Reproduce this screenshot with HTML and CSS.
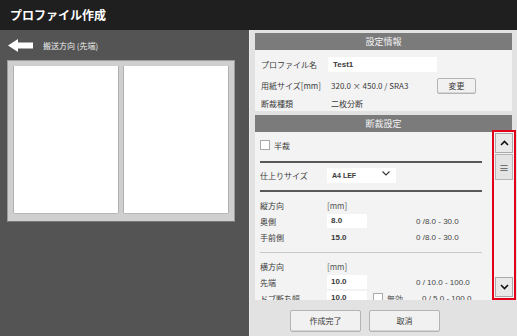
FILE: index.html
```html
<!DOCTYPE html>
<html>
<head>
    <meta charset="utf-8">
    <title>プロファイル作成</title>
    <link rel="stylesheet" href="styles.css">
</head>
<body>
    <div class="header">プロファイル作成</div>

    <div class="main">
        <!-- 左側: 用紙プレビュー -->
        <div class="preview">
            <div class="direction">
                <svg class="arrow" width="25" height="13" viewBox="0 0 25 13">
                    <path d="M0 6.5 L10 0 L10 3.5 L25 3.5 L25 9.5 L10 9.5 L10 13 Z" fill="#fff"/>
                </svg>
                <span>搬送方向 (先端)</span>
            </div>
            <div class="sheet">
                <div class="page"></div>
                <div class="page"></div>
            </div>
        </div>

        <!-- 右側: 設定 -->
        <div class="settings">
            <div class="section-title">設定情報</div>
            <div class="info">
                <div class="info-row r1">
                    <span class="label">プロファイル名</span>
                    <span class="text-box name-box">Test1</span>
                </div>
                <div class="info-row r2">
                    <span class="label">用紙サイズ[mm]</span>
                    <span class="value">320.0 × 450.0 / SRA3</span>
                    <span class="btn small-btn">変更</span>
                </div>
                <div class="info-row r3">
                    <span class="label">断裁種類</span>
                    <span class="value">二枚分断</span>
                </div>
            </div>

            <div class="section-title">断裁設定</div>
            <div class="scroll-area">
                <div class="scroll-content">
                    <div class="row">
                        <span class="check"></span><span>半裁</span>
                    </div>
                    <div class="rule thick"></div>
                    <div class="row">
                        <span class="label">仕上りサイズ</span>
                        <span class="select">A4 LEF
                            <svg width="8" height="5" viewBox="0 0 8 5"><path d="M0.5 0.5 L4 4 L7.5 0.5" fill="none" stroke="#333" stroke-width="1.1"/></svg>
                        </span>
                    </div>
                    <div class="rule thick second"></div>
                    <div class="row">
                        <span class="label">縦方向</span>
                        <span class="unit">[mm]</span>
                    </div>
                    <div class="row">
                        <span class="label">奥側</span>
                        <span class="text-box num-box">8.0</span>
                        <span class="range">0 /8.0 - 30.0</span>
                    </div>
                    <div class="row">
                        <span class="label">手前側</span>
                        <span class="plain-num">15.0</span>
                        <span class="range">0 /8.0 - 30.0</span>
                    </div>
                    <div class="rule thin"></div>
                    <div class="row">
                        <span class="label">横方向</span>
                        <span class="unit">[mm]</span>
                    </div>
                    <div class="row">
                        <span class="label">先端</span>
                        <span class="text-box num-box">10.0</span>
                        <span class="range">0 / 10.0 - 100.0</span>
                    </div>
                    <div class="row">
                        <span class="label">ドブ断ち幅</span>
                        <span class="text-box num-box">10.0</span>
                        <span class="check small-gap"></span><span class="off">無効</span>
                        <span class="range short">0 / 5.0 - 100.0</span>
                    </div>
                </div>
                <div class="scrollbar">
                    <div class="sb-btn">
                        <svg width="9" height="6" viewBox="0 0 9 6"><path d="M1 5 L4.5 1.5 L8 5" fill="none" stroke="#111" stroke-width="1.6"/></svg>
                    </div>
                    <div class="sb-thumb">≡</div>
                    <div class="sb-track"></div>
                    <div class="sb-btn">
                        <svg width="9" height="6" viewBox="0 0 9 6"><path d="M1 1 L4.5 4.5 L8 1" fill="none" stroke="#111" stroke-width="1.6"/></svg>
                    </div>
                </div>
            </div>

            <div class="footer">
                <span class="btn big-btn">作成完了</span>
                <span class="btn big-btn">取消</span>
            </div>
        </div>
    </div>
</body>
</html>
```

FILE: styles.css
```css
body {
    margin: 0;
    padding: 0;
    width: 517px;
    height: 336px;
    overflow: hidden;
    font-family: "Noto Sans CJK JP", "Liberation Sans", sans-serif;
    font-size: 8px;
    color: #3a3a3a;
    background: #545454;
}

.header {
    height: 30px;
    line-height: 30px;
    padding-left: 10px;
    background: #1f1f1f;
    color: #fff;
    font-size: 12px;
    font-weight: bold;
}

.main {
    display: flex;
    height: 306px;
}

/* 左側 */
.preview {
    width: 249px;
    padding: 9px 0 0 7px;
    box-sizing: border-box;
}

.direction {
    display: flex;
    align-items: center;
    height: 13px;
    color: #eee;
    font-size: 8px;
}

.arrow {
    margin-left: 1px;
    margin-right: 10px;
}

.sheet {
    margin-top: 8px;
    width: 228px;
    height: 162px;
    box-sizing: border-box;
    display: grid;
    grid-template-columns: 1fr 1fr;
    gap: 6px;
    padding: 5px 6px 8px 6px;
    background: #cfcfcf;
    border: 1px solid #9c9c9c;
    border-bottom-color: #777;
}

.page {
    background: #fff;
    box-shadow: -1px 0 0 #b0b0b0, 1px 0 0 #b0b0b0, 0 1px 0 #b8b8b8;
}

/* 右側 */
.settings {
    width: 268px;
    padding: 3px 5px 0 5px;
    box-sizing: border-box;
    background: #e2e2e2;
    border-left: 1px solid #ededed;
    display: flex;
    flex-direction: column;
}

.section-title {
    height: 17px;
    line-height: 17px;
    text-align: center;
    background: #7b7b7b;
    color: #f4f4f4;
    font-size: 9px;
}

.info {
    background: #f3f3f3;
    padding: 6px 0 2px 6px;
    margin-bottom: 4px;
}

.info-row {
    display: flex;
    align-items: center;
}

.r1 { height: 17px; }
.r2 { height: 25px; }
.r3 { height: 11px; }

.label {
    width: 67px;
    flex-shrink: 0;
}

.value {
    padding-left: 3px;
    width: 106px;
}

.text-box {
    background: #fff;
    height: 15px;
    line-height: 15px;
    padding-left: 5px;
    box-sizing: border-box;
    font-weight: bold;
    font-family: "Liberation Sans", sans-serif;
}

.name-box {
    width: 109px;
}

.btn {
    display: inline-block;
    text-align: center;
    background: #f1f1f1;
    border: 1px solid #b4b4b4;
    border-radius: 2px;
    box-sizing: border-box;
    box-shadow: inset 0 -1px 0 #d6d6d6;
}

.small-btn {
    width: 39px;
    height: 16px;
    line-height: 14px;
}

/* 断裁設定 */
.scroll-area {
    display: flex;
    height: 168px;
    background: #f3f3f3;
}

.scroll-content {
    flex: 1;
    overflow: hidden;
    padding: 5px 0 0 5px;
}

.row {
    display: flex;
    align-items: center;
    height: 16px;
}

.rule {
    margin: 0 10px 0 0;
}

.rule.thick {
    height: 2px;
    background: #585858;
    margin-top: 8px;
    margin-bottom: 4px;
}

.rule.thick.second {
    margin-top: 7px;
    margin-bottom: 5px;
}

.rule.thin {
    height: 1px;
    background: #c8c8c8;
    margin-top: 7px;
    margin-bottom: 5px;
}

.check {
    width: 8px;
    height: 8px;
    border: 1px solid #aaa;
    background: #fff;
    margin-right: 4px;
}

.check.small-gap {
    margin-left: 6px;
}

.off {
    width: 35px;
    color: #555;
}

.select {
    width: 69px;
    height: 15px;
    box-sizing: border-box;
    background: #fff;
    padding: 0 6px 0 5px;
    display: flex;
    align-items: center;
    justify-content: space-between;
    font-weight: bold;
    font-family: "Liberation Sans", sans-serif;
    font-size: 7px;
}

.select svg {
    margin-top: -4px;
}

.unit {
    color: #555;
}

.num-box {
    width: 40px;
    height: 14px;
    line-height: 14px;
    padding-left: 4px;
}

.plain-num {
    width: 40px;
    padding-left: 4px;
    box-sizing: border-box;
    font-weight: bold;
    font-family: "Liberation Sans", sans-serif;
}

.range {
    margin-left: 49px;
    font-family: "Liberation Sans", sans-serif;
    color: #444;
}

.range.short {
    margin-left: 0;
}

.scrollbar {
    width: 24px;
    margin-top: -2px;
    margin-right: -4px;
    border: 2px solid #e3001b;
    box-sizing: border-box;
    display: flex;
    flex-direction: column;
    padding: 1px;
    background: #f3f3f3;
}

.sb-btn {
    height: 18px;
    display: flex;
    align-items: center;
    justify-content: center;
    background: #e9e9e9;
    border: 1px solid #a9a9a9;
}

.sb-thumb {
    height: 26px;
    margin-top: 1px;
    text-align: center;
    line-height: 26px;
    font-size: 10px;
    color: #555;
    background: #e4e4e4;
    border: 1px solid #b5b5b5;
    box-sizing: border-box;
}

.sb-track {
    flex: 1;
    background: #f4f4f4;
}

.footer {
    display: flex;
    gap: 8px;
    padding: 10px 0 0 35px;
    flex: 1;
}

.big-btn {
    width: 71px;
    height: 22px;
    line-height: 20px;
}
```
